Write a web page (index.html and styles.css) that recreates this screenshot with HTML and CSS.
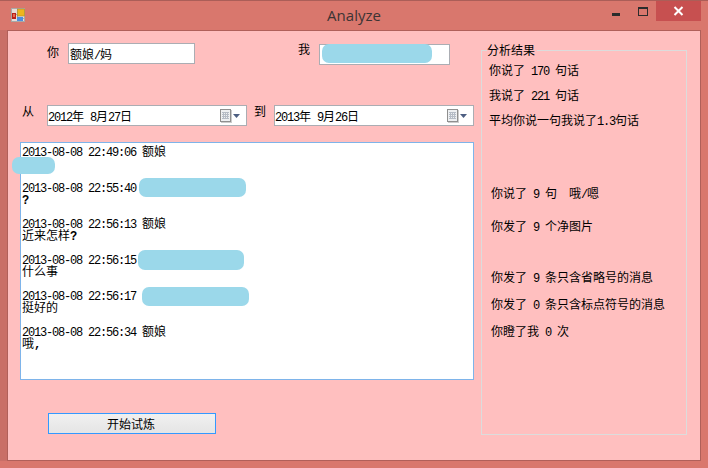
FILE: index.html
```html
<!DOCTYPE html>
<html lang="zh-CN">
<head>
<meta charset="utf-8">
<title>Analyze</title>
<link rel="stylesheet" href="styles.css">
</head>
<body>
<div class="window">
  <header class="titlebar">
    <svg class="app-icon" width="15" height="15" viewBox="0 0 15 15">
      <rect x="0.5" y="0.5" width="13" height="13" fill="#e8dcd8" stroke="#a8a8a8"/>
      <path d="M0 6.5H6M6.5 0V14M6 10.5H14" stroke="#a8a8a8" fill="none"/>
      <rect x="1" y="5" width="4" height="6" fill="#b8221c"/>
      <rect x="2" y="6" width="2" height="3" fill="#e86a50"/>
      <rect x="6.500" y="1" width="7" height="7" fill="#eeb51c" stroke="#a88a30" stroke-width="0.6"/>
      <rect x="6" y="9" width="6" height="4" fill="#4d8ede"/>
    </svg>
    <div class="title">Analyze</div>
    <div class="controls">
      <span class="ctl ctl-min"><i></i></span>
      <span class="ctl ctl-max"><i></i></span>
      <span class="ctl ctl-close">
        <svg width="11" height="10" viewBox="0 0 11 10"><path d="M1.500 1L9.500 9M9.500 1L1.500 9" stroke="#fff" stroke-width="2" fill="none"/></svg>
      </span>
    </div>
  </header>

  <main class="client">
    <section class="left">
      <div class="row row-names">
        <span class="label label-you">你</span>
        <div class="field field-you">额娘<span class="num">/</span>妈</div>
        <span class="label label-me">我</span>
        <div class="field field-me"></div>
      </div>

      <div class="row row-dates">
        <span class="label label-from">从</span>
        <div class="date">
          <span class="date-text"><span class="num">2012</span>年<span class="num"> 8</span>月<span class="num">27</span>日</span>
          <svg class="cal" width="21" height="14" viewBox="0 0 21 14">
            <rect x="1" y="1" width="11" height="13" fill="#9a9a9a" opacity="0.5"/>
            <rect x="0.500" y="0.500" width="10" height="12" fill="#eef0f2" stroke="#8f8f8f"/>
            <path d="M2 3.500H9M2 5.500H9M2 7.500H9M2 9.500H9M3.500 3V10M5.500 3V10M7.500 3V10" stroke="#b5bcc6" fill="none"/>
            <path d="M13 5H20L16.500 9Z" fill="#4d5f82"/>
          </svg>
        </div>
        <span class="label label-to">到</span>
        <div class="date">
          <span class="date-text"><span class="num">2013</span>年<span class="num"> 9</span>月<span class="num">26</span>日</span>
          <svg class="cal" width="21" height="14" viewBox="0 0 21 14">
            <rect x="1" y="1" width="11" height="13" fill="#9a9a9a" opacity="0.5"/>
            <rect x="0.500" y="0.500" width="10" height="12" fill="#eef0f2" stroke="#8f8f8f"/>
            <path d="M2 3.500H9M2 5.500H9M2 7.500H9M2 9.500H9M3.500 3V10M5.500 3V10M7.500 3V10" stroke="#b5bcc6" fill="none"/>
            <path d="M13 5H20L16.500 9Z" fill="#4d5f82"/>
          </svg>
        </div>
      </div>

      <div class="chat">
        <p class="msg"><span class="num">2013-08-08 22:49:06 </span>额娘<br><br></p>
        <p class="msg"><span class="num">2013-08-08 22:55:40</span><br><span class="num strong">?</span></p>
        <p class="msg"><span class="num">2013-08-08 22:56:13 </span>额娘<br>近来怎样<span class="num strong">?</span></p>
        <p class="msg"><span class="num">2013-08-08 22:56:15</span><br>什么事</p>
        <p class="msg"><span class="num">2013-08-08 22:56:17</span><br>挺好的</p>
        <p class="msg"><span class="num">2013-08-08 22:56:34 </span>额娘<br>哦<span class="num strong">,</span></p>
      </div>

      <button class="start" type="button">开始试炼</button>
    </section>

    <fieldset class="results">
      <legend>分析结果</legend>
      <div class="stats stats-a">
        <div class="stat">你说了<span class="num"> 170 </span>句话</div>
        <div class="stat">我说了<span class="num"> 221 </span>句话</div>
        <div class="stat">平均你说一句我说了<span class="num">1.3</span>句话</div>
      </div>
      <div class="stats stats-b">
        <div class="stat">你说了<span class="num"> 9 </span>句<span class="num">  </span>哦<span class="num">/</span>嗯</div>
        <div class="stat">你发了<span class="num"> 9 </span>个净图片</div>
      </div>
      <div class="stats stats-c">
        <div class="stat">你发了<span class="num"> 9 </span>条只含省略号的消息</div>
        <div class="stat">你发了<span class="num"> 0 </span>条只含标点符号的消息</div>
        <div class="stat">你瞪了我<span class="num"> 0 </span>次</div>
      </div>
    </fieldset>
  </main>

  <span class="blot blot-me"></span>
  <span class="blot blot-1"></span>
  <span class="blot blot-2"></span>
  <span class="blot blot-3"></span>
  <span class="blot blot-4"></span>
</div>
</body>
</html>
```

FILE: styles.css
```css
* { box-sizing: border-box; }

html, body { margin: 0; padding: 0; }

body {
  font: 12px/12px "Noto Sans CJK SC", "Liberation Sans", sans-serif;
  color: #000;
}

.num {
  font-family: "Liberation Mono", monospace;
  font-size: 12px;
  line-height: 0;
  letter-spacing: -1.2px;
  white-space: pre;
}
.strong { font-weight: 700; }

.window {
  position: relative;
  width: 708px;
  height: 468px;
  display: flex;
  flex-direction: column;
  overflow: hidden;
  background: #d9776d;
  border-top: 1px solid #ab5e58;
}

.titlebar {
  position: relative;
  height: 29px;
  flex: none;
  display: flex;
  align-items: flex-start;
}

.app-icon { margin: 7px 0 0 11px; flex: none; }

.title {
  position: absolute;
  left: 0;
  right: 0;
  top: 4px;
  text-align: center;
  font: 15px/20px "Open Sans", sans-serif;
  color: #3c3434;
}

.controls {
  margin-left: auto;
  margin-right: 7px;
  display: flex;
  align-items: flex-start;
}

.ctl { display: flex; align-items: center; justify-content: center; height: 20px; }
.ctl-min { width: 26px; margin-right: 1px; }
.ctl-min i { display: block; width: 8px; height: 3px; background: #2c2c2c; margin-top: 6px; }
.ctl-max { width: 26px; }
.ctl-max i { display: block; width: 10px; height: 9px; border: 1px solid #2c2c2c; border-top-width: 2px; margin-top: 1px; }
.ctl-close { width: 45px; background: #c75050; }

.client {
  flex: 1;
  margin: 0 7px 7px;
  border: 1px solid #b0605a;
  background: #ffbfbf;
  box-shadow: -7px 0 0 #c96f67;
  display: flex;
  align-items: flex-start;
  padding: 12px 0 0 12px;
  min-height: 0;
}

.left { width: 461px; flex: none; display: flex; flex-direction: column; align-items: flex-start; }

.row { display: flex; align-items: flex-start; }
.row-names { height: 22px; }
.row-dates { margin-top: 40px; }

.label { width: 12px; height: 13px; flex: none; }
.label-you { margin: 3px 9px 0 27px; }
.label-me { margin: 0 9px 0 103px; }
.label-from { margin: 0 13px 0 2px; }
.label-to { margin: 0 8px 0 7px; }

.field {
  background: #fff;
  border: 1px solid #abadb3;
  height: 21px;
  padding: 4px 0 0 1px;
  flex: none;
}
.field-you { width: 127px; }
.field-me { width: 131px; margin-top: 1px; }

.date {
  width: 200px;
  height: 21px;
  flex: none;
  background: #fff;
  border: 1px solid #abadb3;
  display: flex;
  align-items: flex-start;
  padding: 4px 5px 0 0;
}
.date-text { flex: 1; }
.cal { margin-top: -1px; }

.chat {
  width: 454px;
  height: 238px;
  margin-top: 16px;
  background: #fff;
  border: 1px solid #7eb4ea;
  padding: 2px 1px;
}

.msg { margin: 0 0 12px; }

.start {
  width: 168px;
  height: 21px;
  margin: 33px 0 0 28px;
  padding: 0 2px 0 0;
  border: 1px solid #3399ff;
  border-radius: 0;
  background: linear-gradient(#f0f0f0, #e5e5e5);
  color: #000;
  font: inherit;
}

.results {
  width: 206px;
  height: 392px;
  margin: 0;
  padding: 0;
  border: 1px solid #dcdcdc;
  display: block;
  min-width: 0;
}

.results legend {
  margin-left: 5px;
  padding: 0 2px 0 0;
  line-height: 14px;
}

.stats { display: flex; flex-direction: column; }
.stats-a { margin: 7px 0 0 7px; gap: 13px; }
.stats-b { margin: 61px 0 0 9px; gap: 21px; }
.stats-c { margin: 39px 0 0 9px; gap: 15px; }

.blot {
  position: absolute;
  background: #9bd8ea;
  border-radius: 7px;
}
.blot-me { left: 322px; top: 43px; width: 110px; height: 19px; }
.blot-1 { left: 12px; top: 156px; width: 43px; height: 17px; }
.blot-2 { left: 139px; top: 177px; width: 107px; height: 19px; }
.blot-3 { left: 138px; top: 249px; width: 106px; height: 20px; }
.blot-4 { left: 142px; top: 286px; width: 107px; height: 19px; }
```
